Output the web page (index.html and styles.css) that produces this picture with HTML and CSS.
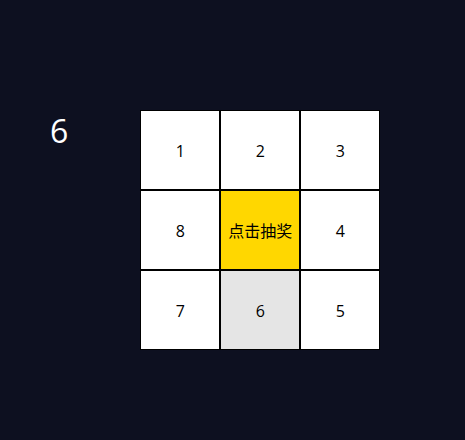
FILE: index.html
```html
<!DOCTYPE html>
<html lang="zh-CN">
<head>
<meta charset="utf-8">
<meta name="viewport" content="width=device-width, initial-scale=1">
<title>九宫格抽奖</title>
<link rel="stylesheet" href="styles.css">
</head>
<body>
<main class="lottery">
  <output class="result" for="draw">6</output>
  <div class="board">
    <div class="cell">1</div>
    <div class="cell">2</div>
    <div class="cell">3</div>
    <div class="cell">8</div>
    <button class="cell draw" id="draw" type="button">点击抽奖</button>
    <div class="cell">4</div>
    <div class="cell">7</div>
    <div class="cell active">6</div>
    <div class="cell">5</div>
  </div>
</main>
</body>
</html>
```
FILE: styles.css
```css
* {
  box-sizing: border-box;
}

body {
  margin: 0;
  min-height: 100vh;
  background: #0d1020;
  font-family: "Open Sans", "Noto Sans CJK SC", sans-serif;
  font-size: 16px;
}

.lottery {
  display: flex;
  align-items: flex-start;
  gap: 72px;
  padding: 110px 50px;
}

.result {
  color: #fff;
  font-size: 32px;
  font-weight: 500;
  line-height: 42px;
}

.board {
  display: grid;
  grid-template-columns: repeat(3, 80px);
  grid-auto-rows: 80px;
}

.cell {
  display: flex;
  align-items: center;
  justify-content: center;
  padding: 2px 0 0;
  border: 1px solid #000;
  background: #fff;
  color: #000;
  font: inherit;
}

.draw {
  padding: 0;
  background: #ffd700;
  cursor: pointer;
}

.active {
  background: #e5e5e5;
}
```
